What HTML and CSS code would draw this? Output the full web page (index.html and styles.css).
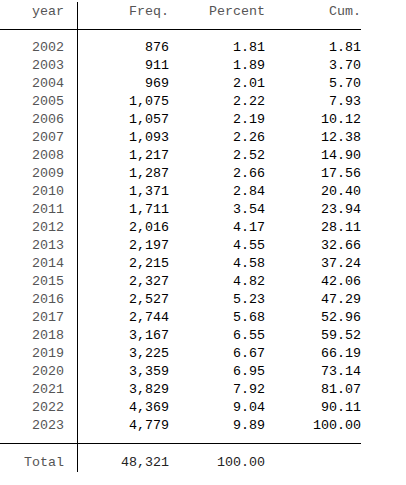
FILE: index.html
```html
<!DOCTYPE html>
<html lang="en">
<head>
    <meta charset="UTF-8">
    <title>tabulate year</title>
    <link rel="stylesheet" href="styles.css">
</head>
<body>
    <div class="tab">
        <div class="row head">
            <span class="lbl">year</span>
            <span class="num">Freq.</span>
            <span class="num">Percent</span>
            <span class="num">Cum.</span>
        </div>
        <div class="body" id="rows"></div>
        <div class="row total">
            <span class="lbl">Total</span>
            <span class="num">48,321</span>
            <span class="num">100.00</span>
            <span class="num"></span>
        </div>
    </div>

    <script>
        const data = [
            ['2002', '876', '1.81', '1.81'],
            ['2003', '911', '1.89', '3.70'],
            ['2004', '969', '2.01', '5.70'],
            ['2005', '1,075', '2.22', '7.93'],
            ['2006', '1,057', '2.19', '10.12'],
            ['2007', '1,093', '2.26', '12.38'],
            ['2008', '1,217', '2.52', '14.90'],
            ['2009', '1,287', '2.66', '17.56'],
            ['2010', '1,371', '2.84', '20.40'],
            ['2011', '1,711', '3.54', '23.94'],
            ['2012', '2,016', '4.17', '28.11'],
            ['2013', '2,197', '4.55', '32.66'],
            ['2014', '2,215', '4.58', '37.24'],
            ['2015', '2,327', '4.82', '42.06'],
            ['2016', '2,527', '5.23', '47.29'],
            ['2017', '2,744', '5.68', '52.96'],
            ['2018', '3,167', '6.55', '59.52'],
            ['2019', '3,225', '6.67', '66.19'],
            ['2020', '3,359', '6.95', '73.14'],
            ['2021', '3,829', '7.92', '81.07'],
            ['2022', '4,369', '9.04', '90.11'],
            ['2023', '4,779', '9.89', '100.00']
        ];

        const body = document.getElementById('rows');
        data.forEach(r => {
            const row = document.createElement('div');
            row.className = 'row';
            row.innerHTML = '<span class="lbl">' + r[0] + '</span>' +
                '<span class="num">' + r[1] + '</span>' +
                '<span class="num">' + r[2] + '</span>' +
                '<span class="num">' + r[3] + '</span>';
            body.appendChild(row);
        });
    </script>
</body>
</html>
```

FILE: styles.css
```css
body {
    margin: 0;
    padding: 2px 0 0 0;
    background: #fff;
    font-family: "Liberation Mono", "Courier New", monospace;
    font-size: 13.33px;
    color: #000;
}

.tab {
    width: 361px;
}

.row {
    display: grid;
    grid-template-columns: 78px 91px 96px 96px;
    line-height: 18px;
    height: 18px;
}

.lbl {
    text-align: right;
    padding-right: 13px;
    border-right: 1px solid #000;
    color: #555;
}

.num {
    text-align: right;
    color: #000;
}

.head {
    height: 27px;
    border-bottom: 1px solid #000;
}

.head .lbl,
.head .num {
    padding-top: 1px;
    color: #555;
}

/* the vertical rule runs through the padding too */
.body {
    padding: 9px 0 8px 0;
    border-bottom: 1px solid #000;
    background: linear-gradient(#000, #000) 77px 0 / 1px 100% no-repeat;
}

.total {
    height: 18px;
    padding-top: 10px;
    background: linear-gradient(#000, #000) 77px 0 / 1px 100% no-repeat;
}

.total .num {
    color: #222;
}
```
